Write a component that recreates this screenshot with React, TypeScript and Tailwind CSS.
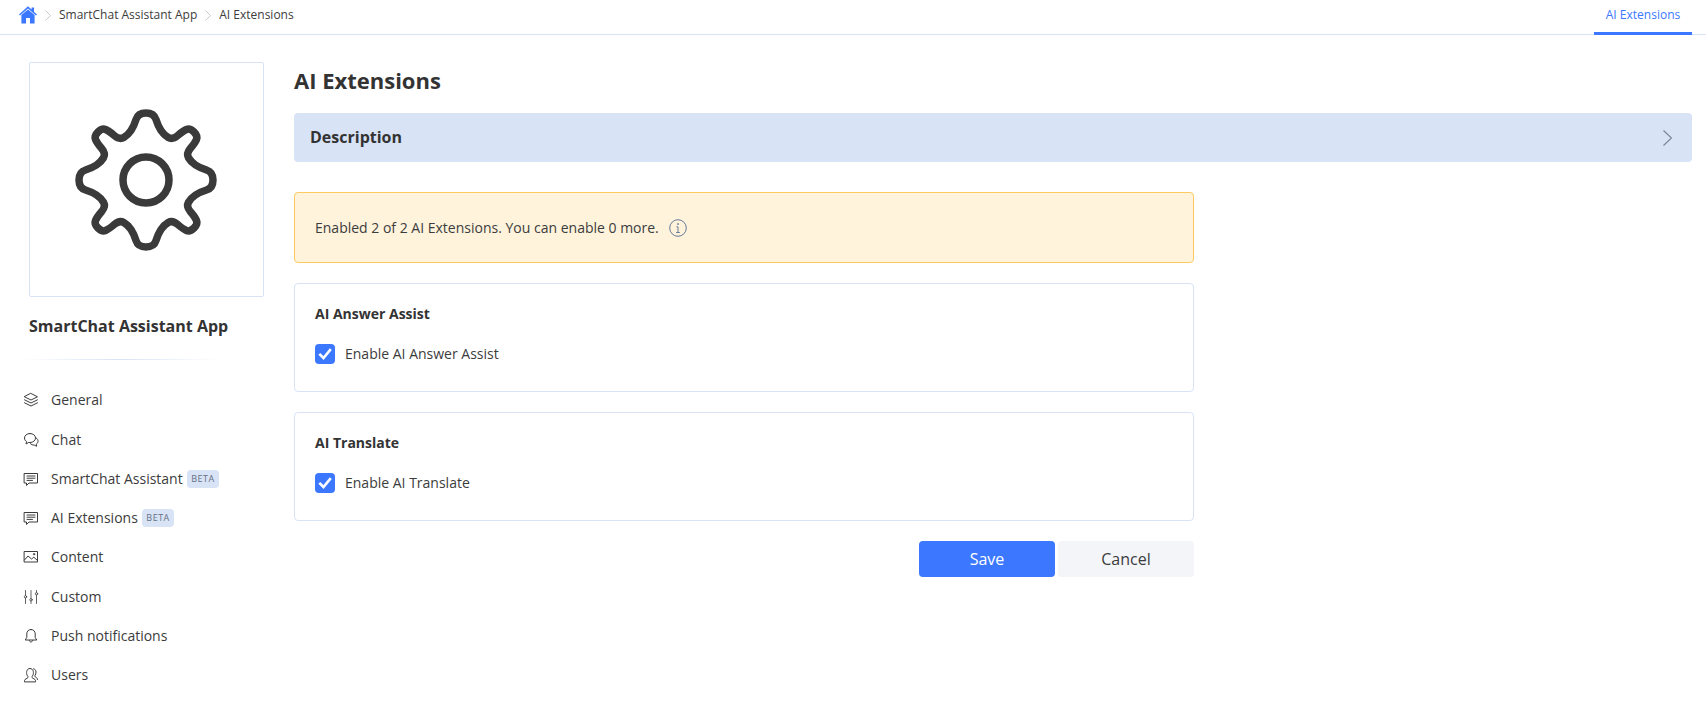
import type { ReactNode } from 'react';

type Pt = [number, number];

// gear outline traced from one quarter (top tooth to left tooth), turned four times
const gearPath = () => {
  const half: Pt[] = [[-8, -67], [-12, -54], [-18, -45], [-26.5, -40], [-37, -49], [-44, -52]];
  const quarter: Pt[] = [...half, ...[...half].reverse().map(([x, y]): Pt => [y, x])];
  const pts: Pt[] = [];
  let cur = quarter;
  for (let i = 0; i < 4; i++) {
    pts.push(...cur);
    cur = cur.map(([x, y]): Pt => [y, -x]);
  }
  const mid = (p: Pt, q: Pt) => `${((p[0] + q[0]) / 2).toFixed(2)} ${((p[1] + q[1]) / 2).toFixed(2)}`;
  let d = `M${mid(pts[pts.length - 1], pts[0])}`;
  pts.forEach((p, i) => {
    d += ` Q${p[0]} ${p[1]} ${mid(p, pts[(i + 1) % pts.length])}`;
  });
  return d + 'Z';
};

function Gear() {
  return (
    <svg width="150" height="150" viewBox="-75 -75 150 150" fill="none" stroke="#3a3a3a" strokeWidth="7.5" className="blur-[0.7px]">
      <path d={gearPath()} strokeLinejoin="round" />
      <circle r="23" />
    </svg>
  );
}

function HomeIcon() {
  return (
    <svg width="18" height="18" viewBox="0 0 18 18" fill="#3b78ff">
      <path d="M9 0.3 L12.6 3.6 V1.4 H15 V5.8 L18 8.6 L17 9.4 L9 2.4 L1 9.4 L0 8.6 Z" />
      <path d="M2.4 9 L9 3.4 L15.6 9 V17.5 H11 V12 H7 V17.5 H2.4 Z" />
    </svg>
  );
}

function Crumb() {
  return (
    <svg width="6" height="11" viewBox="0 0 6 11" fill="none" stroke="#c9c9c9" className="mx-[8px]">
      <path d="M0.5 0.5 L5.5 5.5 L0.5 10.5" />
    </svg>
  );
}

function NavIcon({ children }: { children: ReactNode }) {
  return (
    <svg width="16" height="16" viewBox="0 0 16 16" fill="none" stroke="#3c3c3c" strokeWidth="1" strokeLinejoin="round" strokeLinecap="round" className="shrink-0">
      {children}
    </svg>
  );
}

const messageIcon = (
  <>
    <path d="M1.5 2.5 H14.5 V12 H6 L3.5 14.5 V12 H1.5 Z" />
    <path d="M4 5 H12 M4 7.2 H12 M4 9.4 H9.5" />
  </>
);

const navItems: { label: string; icon: ReactNode; beta?: boolean }[] = [
  {
    label: 'General',
    icon: (
      <>
        <path d="M8 1.5 L14.5 4.8 L8 8 L1.5 4.8 Z" />
        <path d="M1.5 7.8 L8 11 L14.5 7.8 M1.5 10.8 L8 14 L14.5 10.8" />
      </>
    ),
  },
  {
    label: 'Chat',
    icon: (
      <>
        <path d="M7 1.5 C3.8 1.5 1.5 3.5 1.5 6 C1.5 7.6 2.3 8.8 3.6 9.6 L3 12 L5.8 10.4 C6.2 10.5 6.6 10.5 7 10.5 C10.2 10.5 12.5 8.5 12.5 6 C12.5 3.5 10.2 1.5 7 1.5 Z" />
        <path d="M13.3 6 C14.7 7 15 8.2 15 9.2 C15 10.5 14.2 11.5 13.3 12.2 L13.6 14.3 L11.2 13 C9.7 13.2 8.2 12.6 7.4 11.6" />
      </>
    ),
  },
  { label: 'SmartChat Assistant', icon: messageIcon, beta: true },
  { label: 'AI Extensions', icon: messageIcon, beta: true },
  {
    label: 'Content',
    icon: (
      <>
        <rect x="1.5" y="2.5" width="13" height="10.5" />
        <path d="M1.5 11 L5 7 L8.5 10 L10.8 8.2 L14.5 11.5" />
        <circle cx="11" cy="5.2" r="0.7" />
      </>
    ),
  },
  {
    label: 'Custom',
    icon: (
      <g strokeWidth="0.8">
        <path d="M2.5 1.5 V6.5 M2.5 9 V14.5 M8 1.5 V9.5 M8 12 V14.5 M13.5 1.5 V3.5 M13.5 6 V14.5" />
        <circle cx="2.5" cy="7.8" r="1.2" />
        <circle cx="8" cy="10.8" r="1.2" />
        <circle cx="13.5" cy="4.8" r="1.2" />
      </g>
    ),
  },
  {
    label: 'Push notifications',
    icon: (
      <>
        <path d="M8 1.5 C5 1.5 3.8 3.7 3.8 6 V9.5 L2.2 12 H13.8 L12.2 9.5 V6 C12.2 3.7 11 1.5 8 1.5 Z" />
        <path d="M6.3 12.5 C6.6 14.6 9.4 14.6 9.7 12.5" />
      </>
    ),
  },
  {
    label: 'Users',
    icon: (
      <>
        <path d="M1.5 14.5 V13.5 C1.5 12 4.5 11.5 5 10.5 C5.2 10 5 9.5 4.5 8.9 C3.5 7.5 3.5 5.8 3.7 4.5 C4 2.5 5.5 1.5 7 1.5 C8.5 1.5 10 2.5 10.3 4.5 C10.5 5.8 10.5 7.5 9.5 8.9 C9 9.5 8.8 10 9 10.5 C9.5 11.5 12.5 12 12.5 13.5 V14.5 Z" />
        <path d="M10.5 1.8 C12 2 13 3.2 13 5 C13 6.5 12.7 7.5 12 8.3 C11.7 8.8 11.8 9.3 12.2 9.8 C13.2 10.4 14.5 11 14.5 12.5" />
      </>
    ),
  },
];

function ExtensionCard({ title, label }: { title: string; label: string }) {
  return (
    <div className="h-[109px] rounded border border-[#d8e3f6] px-[20px] pt-[19px]">
      <h3 className="text-sm leading-[22px] font-bold text-[#333]">{title}</h3>
      <label className="mt-[19px] flex items-center text-sm text-[#3c3c3c]">
        <span className="mr-[10px] h-5 w-5 rounded bg-[#3b78ff]">
          <svg width="20" height="20" viewBox="0 0 20 20" fill="none" stroke="#fff" strokeWidth="2.6">
            <path d="M4.3 9.8 L8.5 14 L15.8 5.2" />
          </svg>
        </span>
        {label}
      </label>
    </div>
  );
}

export default function App() {
  return (
    <div className="min-h-screen bg-white font-['Open_Sans',sans-serif] text-[#3c3c3c]">
      <header className="flex h-[35px] items-start justify-between border-b border-[#d8e3f6] pr-[14px]">
        <div className="flex h-[30px] items-center pl-[19px] text-xs">
          <HomeIcon />
          <Crumb />
          <span>SmartChat Assistant App</span>
          <Crumb />
          <span>AI Extensions</span>
        </div>
        <div className="flex h-[35px] w-[98px] items-start justify-center border-b-[3px] border-[#3b78ff] pt-[7px] text-xs text-[#3b78ff]">AI Extensions</div>
      </header>

      <div className="flex">
        <aside className="w-[294px] shrink-0 pl-[23px]">
          <div className="mt-[27px] ml-[6px] flex h-[235px] w-[235px] items-center justify-center rounded-[2px] border border-[#d8e3f6] pr-[1px]">
            <Gear />
          </div>
          <div className="mt-[18px] ml-[6px] text-base leading-[22px] font-bold text-[#333]">SmartChat Assistant App</div>
          <div className="mt-[22px] -ml-[3px] h-px w-[200px] bg-gradient-to-r from-transparent via-[#d8e3f6] to-transparent" />
          <nav className="mt-[20.6px]">
            {navItems.map((item) => (
              <div key={item.label} className="flex h-[39.3px] items-center text-sm">
                <NavIcon>{item.icon}</NavIcon>
                <span className="ml-[12px]">{item.label}</span>
                {item.beta && (
                  <span className="ml-1 rounded-sm bg-[#d8e3f6] px-[4.5px] text-[9px] leading-[18px] tracking-[0.5px] text-[#667085]">BETA</span>
                )}
              </div>
            ))}
          </nav>
        </aside>

        <main className="mr-[14px] min-w-0 flex-1">
          <h1 className="mt-[31px] text-[22px] leading-[28px] font-bold text-[#333]">AI Extensions</h1>
          <div className="mt-[19px] flex h-[49px] items-center justify-between rounded bg-[#d8e3f6] pr-[20px] pl-[16px]">
            <span className="pb-[2px] text-base font-bold text-[#333]">Description</span>
            <svg width="9" height="16" viewBox="0 0 9 16" fill="none" stroke="#7d8595" strokeWidth="1.2">
              <path d="M0.5 0.5 L8.5 8 L0.5 15.5" />
            </svg>
          </div>
          <div className="mt-[30px] flex w-[900px] flex-col gap-5">
            <div className="flex h-[71px] items-center rounded border border-[#fdc95f] bg-[#fff3dc] px-[20px] text-sm">
              Enabled 2 of 2 AI Extensions. You can enable 0 more.
              <svg width="18" height="18" viewBox="0 0 18 18" fill="none" stroke="#667a99" className="ml-[10px]">
                <circle cx="9" cy="9" r="8.3" />
                <path d="M7.5 7.8 H9 V13.5 M7.2 13.5 H10.8" />
                <circle cx="9" cy="5" r="0.5" fill="#667a99" />
              </svg>
            </div>
            <ExtensionCard title="AI Answer Assist" label="Enable AI Answer Assist" />
            <ExtensionCard title="AI Translate" label="Enable AI Translate" />
            <div className="flex justify-end gap-[3px]">
              <button className="h-9 w-[136px] rounded bg-[#3b78ff] text-base text-white">Save</button>
              <button className="h-9 w-[136px] rounded bg-[#f3f5f9] text-base text-[#3c3c3c]">Cancel</button>
            </div>
          </div>
        </main>
      </div>
    </div>
  );
}
